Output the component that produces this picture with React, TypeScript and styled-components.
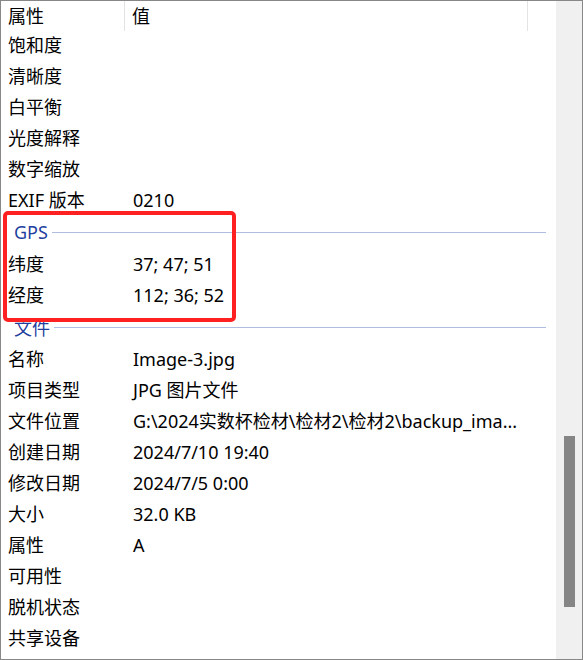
import React from "react";
import styled, { createGlobalStyle } from "styled-components";

const Global = createGlobalStyle`
  html, body { margin: 0; padding: 0; background: #fff; overflow: hidden; }
  * { box-sizing: border-box; }
`;

const Window = styled.div`
  position: relative;
  width: 583px;
  height: 660px;
  border: 1px solid #878787;
  display: flex;
  background: #fff;
  font-family: "Noto Sans", "Noto Sans CJK SC", sans-serif;
  font-size: 18px;
  color: #000;
  overflow: hidden;
`;

const Content = styled.div`
  flex: 1;
  display: flex;
  flex-direction: column;
  min-width: 0;
`;

const Header = styled.div`
  display: grid;
  grid-template-columns: 124px 403px 1fr;
  height: 29px;
`;

const HeaderCell = styled.div<{ $divider?: boolean }>`
  padding: 1px 0 0 7px;
  line-height: 28px;
  border-right: ${(p) => (p.$divider ? "1px solid #e3e3e3" : "none")};
  height: 30px;
`;

const Row = styled.div`
  display: grid;
  grid-template-columns: 124px 1fr;
  height: 31px;
  flex-shrink: 0;
  align-items: center;
  white-space: nowrap;
`;

const Cell = styled.div<{ $value?: boolean }>`
  padding-left: ${(p) => (p.$value ? "8px" : "7px")};
  line-height: 31px;
  overflow: hidden;
`;

const Group = styled.div`
  display: flex;
  align-items: center;
  height: 33px;
  flex-shrink: 0;
  padding: 0 10px 2px 13px;
  gap: 4px;
  color: #1f3f9f;
`;

const GroupLine = styled.div`
  flex: 1;
  height: 1px;
  background: #afbde0;
  margin-top: 1px;
`;

const Track = styled.div`
  width: 26px;
  background: #f0f0f0;
  display: flex;
  justify-content: center;
  padding-top: 435px;
`;

const Thumb = styled.div`
  width: 11px;
  height: 171px;
  background: #858585;
`;

const Highlight = styled.div`
  position: absolute;
  left: 2px;
  top: 210px;
  width: 233px;
  height: 111px;
  border: 4px solid #ff2121;
  border-radius: 5px;
  pointer-events: none;
`;

type Item = { k: string; v?: string } | { group: string };

const items: Item[] = [
  { k: "饱和度" },
  { k: "清晰度" },
  { k: "白平衡" },
  { k: "光度解释" },
  { k: "数字缩放" },
  { k: "EXIF 版本", v: "0210" },
  { group: "GPS" },
  { k: "纬度", v: "37; 47; 51" },
  { k: "经度", v: "112; 36; 52" },
  { group: "文件" },
  { k: "名称", v: "Image-3.jpg" },
  { k: "项目类型", v: "JPG 图片文件" },
  { k: "文件位置", v: "G:\\2024实数杯检材\\检材2\\检材2\\backup_ima..." },
  { k: "创建日期", v: "2024/7/10 19:40" },
  { k: "修改日期", v: "2024/7/5 0:00" },
  { k: "大小", v: "32.0 KB" },
  { k: "属性", v: "A" },
  { k: "可用性" },
  { k: "脱机状态" },
  { k: "共享设备" },
];

export default function App() {
  return (
    <>
      <Global />
      <Window>
        <Content>
          <Header>
            <HeaderCell $divider>属性</HeaderCell>
            <HeaderCell $divider>值</HeaderCell>
            <HeaderCell />
          </Header>
          {items.map((it, i) =>
            "group" in it ? (
              <Group key={i}>
                <span>{it.group}</span>
                <GroupLine />
              </Group>
            ) : (
              <Row key={i}>
                <Cell>{it.k}</Cell>
                <Cell $value>{it.v ?? ""}</Cell>
              </Row>
            )
          )}
        </Content>
        <Track>
          <Thumb />
        </Track>
        <Highlight />
      </Window>
    </>
  );
}
